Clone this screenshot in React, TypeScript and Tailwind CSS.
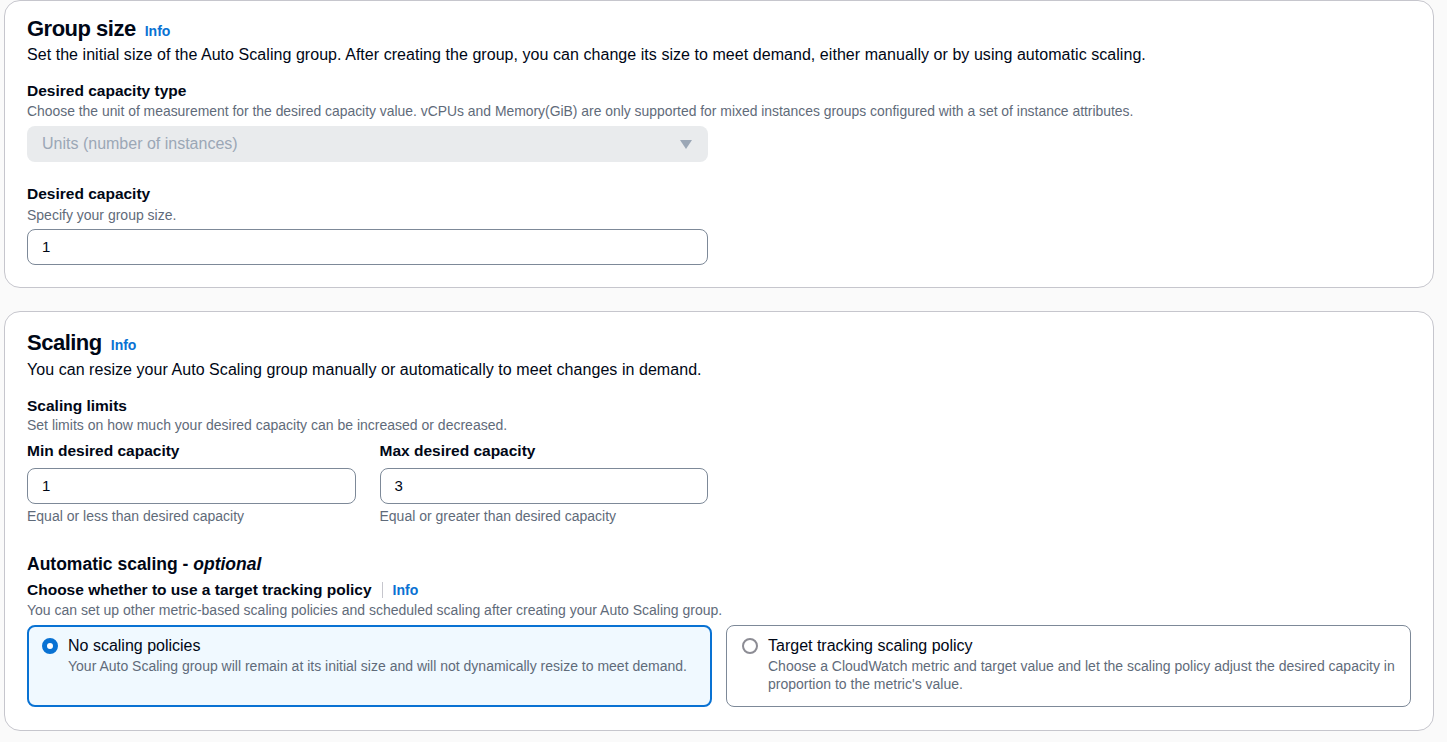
import type { ReactNode } from "react";

function Info({ className = "" }: { className?: string }) {
  return <span className={`font-bold text-[#0972d3] ${className}`}>Info</span>;
}

function Card({ children, className = "" }: { children: ReactNode; className?: string }) {
  return (
    <div className={`rounded-2xl border border-[#c6c6cd] bg-white px-[22px] ${className}`}>
      {children}
    </div>
  );
}

function TextInput({ value, className = "" }: { value: string; className?: string }) {
  return (
    <div
      className={`flex h-[36px] items-center rounded-lg border border-[#7d8998] bg-white px-[14px] text-[15px] text-[#000716] ${className}`}
    >
      {value}
    </div>
  );
}

function Radio({ checked }: { checked: boolean }) {
  return checked ? (
    <span className="mt-[2px] block h-4 w-4 shrink-0 rounded-full border-[5px] border-[#0972d3] bg-white" />
  ) : (
    <span className="mt-[2px] block h-4 w-4 shrink-0 rounded-full border-2 border-[#8c8c94] bg-white" />
  );
}

function Tile({
  checked,
  title,
  description,
}: {
  checked: boolean;
  title: string;
  description: string;
}) {
  return (
    <div
      className={
        checked
          ? "flex h-[82px] gap-[10px] rounded-lg border-2 border-[#0972d3] bg-[#f0f9ff] pl-[13px] pr-2 pt-[9px]"
          : "flex h-[82px] gap-[10px] rounded-lg border border-[#7d8998] bg-white pl-[15px] pr-2 pt-[10px]"
      }
    >
      <Radio checked={checked} />
      <div>
        <div className="text-[16px] leading-5 text-[#000716]">{title}</div>
        <div className="mt-[1px] text-[14px] leading-[18px] text-[#5f6b7a]">{description}</div>
      </div>
    </div>
  );
}

export default function App() {
  return (
    <div className="min-h-[742px] bg-[#fafafa] pl-1 pr-[13px] font-['Liberation_Sans',Arial,sans-serif] text-[#000716]">
      <Card className="pt-[14px] pb-[22px]">
        <div className="flex items-end gap-[9px] leading-7">
          <h2 className="text-[22px] font-bold tracking-[-0.5px]">Group size</h2>
          <Info className="text-[14px] leading-6" />
        </div>
        <p className="mt-[2px] text-[16px] leading-5 tracking-[0.05px]">
          Set the initial size of the Auto Scaling group. After creating the group, you can change its size to meet
          demand, either manually or by using automatic scaling.
        </p>

        <div className="mt-4 text-[15.5px] font-bold leading-5">Desired capacity type</div>
        <p className="mt-[2px] text-[13.9px] leading-4 text-[#5f6b7a]">
          Choose the unit of measurement for the desired capacity value. vCPUs and Memory(GiB) are only supported for
          mixed instances groups configured with a set of instance attributes.
        </p>
        <div className="mt-[7px] flex h-[36px] w-[681px] items-center justify-between rounded-lg bg-[#e9ebed] pl-[15px] pr-[16px] text-[16px] text-[#9ba7b6]">
          <span>Units (number of instances)</span>
          <svg width="12" height="9" viewBox="0 0 12 9">
            <path d="M0 0h12L6 9z" fill="#9ba7b6" />
          </svg>
        </div>

        <div className="mt-[22px] text-[15.5px] font-bold leading-5">Desired capacity</div>
        <p className="mt-[3px] text-[14px] leading-4 text-[#5f6b7a]">Specify your group size.</p>
        <TextInput value="1" className="mt-[6px] w-[681px]" />
      </Card>

      <Card className="mt-[23px] pt-[17px] pb-[23px]">
        <div className="flex items-end gap-[9px] leading-7">
          <h2 className="text-[22px] font-bold tracking-[-0.5px]">Scaling</h2>
          <Info className="text-[14px] leading-6" />
        </div>
        <p className="mt-[3px] text-[16px] leading-5 tracking-[0.05px]">
          You can resize your Auto Scaling group manually or automatically to meet changes in demand.
        </p>

        <div className="mt-4 text-[15.5px] font-bold leading-5">Scaling limits</div>
        <p className="mt-[1px] text-[14px] leading-4 text-[#5f6b7a]">
          Set limits on how much your desired capacity can be increased or decreased.
        </p>

        <div className="mt-2 grid w-[681px] grid-cols-2 gap-x-6">
          <div>
            <div className="text-[15.5px] font-bold leading-5">Min desired capacity</div>
            <TextInput value="1" className="mt-[7px]" />
            <p className="mt-[4px] text-[14px] leading-4 text-[#5f6b7a]">Equal or less than desired capacity</p>
          </div>
          <div>
            <div className="text-[15.5px] font-bold leading-5">Max desired capacity</div>
            <TextInput value="3" className="mt-[7px]" />
            <p className="mt-[4px] text-[14px] leading-4 text-[#5f6b7a]">Equal or greater than desired capacity</p>
          </div>
        </div>

        <div className="mt-7 text-[17.5px] font-bold leading-6">
          Automatic scaling - <i>optional</i>
        </div>
        <div className="mt-1 flex items-center leading-5">
          <span className="text-[15.5px] font-bold">Choose whether to use a target tracking policy</span>
          <span className="mx-[10px] h-4 w-px bg-[#c6c6cd]" />
          <Info className="text-[14px]" />
        </div>
        <p className="mt-[2px] text-[14px] leading-4 text-[#5f6b7a]">
          You can set up other metric-based scaling policies and scheduled scaling after creating your Auto Scaling
          group.
        </p>

        <div className="mt-[7px] grid grid-cols-2 gap-[14px]">
          <Tile
            checked
            title="No scaling policies"
            description="Your Auto Scaling group will remain at its initial size and will not dynamically resize to meet demand."
          />
          <Tile
            checked={false}
            title="Target tracking scaling policy"
            description="Choose a CloudWatch metric and target value and let the scaling policy adjust the desired capacity in proportion to the metric's value."
          />
        </div>
      </Card>
    </div>
  );
}
